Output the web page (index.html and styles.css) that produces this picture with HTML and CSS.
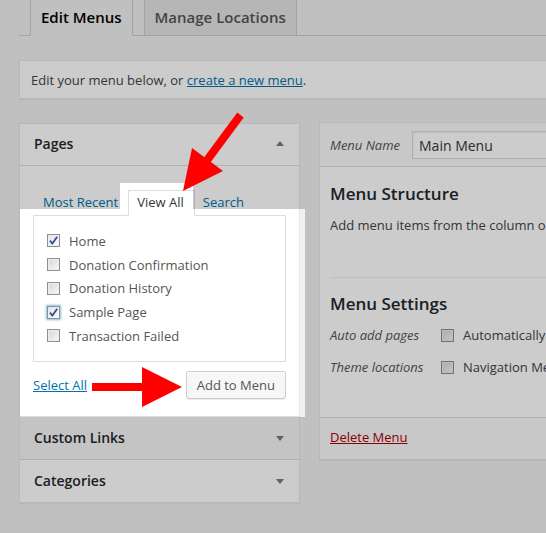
FILE: index.html
```html
<!DOCTYPE html>
<html>
<head>
<meta charset="utf-8">
<title>Menus</title>
<link rel="stylesheet" href="styles.css">
</head>
<body>
<div class="page">
  <div class="nav">
    <a class="nav-tab active" href="#">Edit Menus</a>
    <a class="nav-tab" href="#">Manage Locations</a>
  </div>
  <div class="notice">Edit your menu below, or&nbsp;<a class="link under" href="#">create a new menu</a>.</div>
  <div class="columns">
    <div class="side">
      <div class="accordion">
        <div class="section">
          <div class="sec-title open"><span>Pages</span><span class="tri up"></span></div>
          <div class="sec-content">
            <div class="item-tabs">
              <a class="itab" href="#">Most Recent</a>
              <span class="itab current">View All</span>
              <a class="itab" href="#">Search</a>
            </div>
            <div class="list">
              <div class="row"><span class="cb checked"><svg width="11" height="11" viewBox="0 0 11 11"><path d="M2 5.6 L4.4 8.6 L9.2 1.8" fill="none" stroke="#2f4f9e" stroke-width="1.8"/></svg></span>Home</div>
              <div class="row"><span class="cb"></span>Donation Confirmation</div>
              <div class="row"><span class="cb"></span>Donation History</div>
              <div class="row"><span class="cb checked focus"><svg width="11" height="11" viewBox="0 0 11 11"><path d="M2 5.6 L4.4 8.6 L9.2 1.8" fill="none" stroke="#2f4f9e" stroke-width="1.8"/></svg></span>Sample Page</div>
              <div class="row"><span class="cb"></span>Transaction Failed</div>
            </div>
            <div class="add-row">
              <a class="link under" href="#">Select All</a>
              <button class="btn" type="button">Add to Menu</button>
            </div>
          </div>
        </div>
        <div class="section">
          <div class="sec-title hover"><span>Custom Links</span><span class="tri down"></span></div>
        </div>
        <div class="section">
          <div class="sec-title"><span>Categories</span><span class="tri down"></span></div>
        </div>
      </div>
    </div>
    <div class="main">
      <div class="menu-panel">
        <div class="panel-head">
          <span class="name-label">Menu Name</span>
          <input class="name-input" type="text" value="Main Menu">
        </div>
        <div class="panel-body">
          <h3 class="heading first">Menu Structure</h3>
          <p class="desc">Add menu items from the column on the left.</p>
          <div class="settings">
            <h3 class="heading">Menu Settings</h3>
            <div class="set-row"><span class="set-label">Auto add pages</span><span class="cb"></span><span>Automatically add new top-level pages to this menu</span></div>
            <div class="set-row"><span class="set-label">Theme locations</span><span class="cb"></span><span>Navigation Menu</span></div>
          </div>
        </div>
        <div class="panel-foot"><a class="delete" href="#">Delete Menu</a></div>
      </div>
    </div>
  </div>
</div>
<svg class="overlay" width="546" height="533" viewBox="0 0 546 533">
  <path fill="#000" fill-opacity="0.2" fill-rule="evenodd" d="M0 0H546V533H0Z M20 209H120V183H193V209H305V417H20Z"/>
  <line x1="240.5" y1="115" x2="205" y2="163" stroke="#ff0000" stroke-width="8"/>
  <polygon fill="#ff0000" points="192,148 223,171 183,191"/>
  <rect x="92" y="383" width="51" height="8" fill="#ff0000"/>
  <polygon fill="#ff0000" points="142,367 142,407 182,387"/>
</svg>
</body>
</html>
```
FILE: styles.css
```css
html, body {
  margin: 0;
  padding: 0;
  overflow: hidden;
}
body {
  position: relative;
  width: 546px;
  height: 533px;
  background: #f1f1f1;
  font-family: "Open Sans", "Liberation Sans", sans-serif;
  font-size: 13px;
  line-height: 18px;
  color: #444;
}
.page {
  padding-left: 19px;
  width: 820px;
}
.nav {
  display: flex;
  align-items: flex-end;
  height: 35px;
  border-bottom: 1px solid #ccc;
}
.nav-tab {
  display: block;
  border: 1px solid #ccc;
  border-bottom: none;
  background: #e4e4e4;
  color: #555;
  font-size: 15px;
  line-height: 24px;
  font-weight: 600;
  padding: 14px 10px 6px;
  margin-left: 11px;
  text-decoration: none;
}
.nav-tab.active {
  background: #f1f1f1;
  color: #000;
  border-bottom: 1px solid #f1f1f1;
  margin-bottom: -1px;
}
.notice {
  margin-top: 24px;
  height: 39px;
  box-sizing: border-box;
  border: 1px solid #e5e5e5;
  background: #fff;
  box-shadow: 0 1px 1px rgba(0,0,0,.04);
  display: flex;
  align-items: center;
  padding: 0 11px;
}
.link {
  color: #0073aa;
  text-decoration: none;
}
.under {
  text-decoration: underline;
}
.columns {
  display: flex;
  align-items: flex-start;
  margin-top: 23px;
}
.side {
  width: 281px;
  flex: none;
  margin-top: 1px;
}
.accordion {
  border: 1px solid #e5e5e5;
  background: #fff;
  box-shadow: 0 1px 1px rgba(0,0,0,.04);
}
.section + .section {
  border-top: 1px solid #ddd;
}
.sec-title {
  height: 42px;
  box-sizing: border-box;
  display: flex;
  align-items: center;
  justify-content: space-between;
  padding: 0 15px 0 14px;
  font-size: 14px;
  font-weight: 600;
  color: #23282d;
}
.sec-title.open {
  height: 42px;
  padding-bottom: 2px;
  border-bottom: 1px solid #ddd;
}
.sec-title.hover {
  background: #f5f5f5;
}
.tri {
  width: 0;
  height: 0;
  border-left: 4px solid transparent;
  border-right: 4px solid transparent;
}
.tri.up {
  border-bottom: 5px solid #787c82;
}
.tri.down {
  border-top: 5px solid #787c82;
}
.sec-content {
  padding: 24px 0 17px;
}
.item-tabs {
  display: flex;
  align-items: flex-end;
  height: 25px;
  padding-left: 23px;
}
.itab {
  display: block;
  line-height: 18px;
  padding: 0 0 4px;
  color: #0073aa;
  text-decoration: none;
}
.itab.current {
  position: relative;
  color: #32373c;
  background: #fff;
  border: 1px solid #ddd;
  border-bottom: 1px solid #fff;
  padding: 2px 10px 4px 8px;
  margin: 0 8px -1px 10px;
}
.list {
  border: 1px solid #ddd;
  margin: 0 13px;
  padding: 13px 13px 13.25px;
  background: #fff;
}
.row {
  display: flex;
  align-items: center;
  height: 23.75px;
  color: #555;
}
.cb {
  display: inline-flex;
  align-items: center;
  justify-content: center;
  flex: none;
  width: 13px;
  height: 13px;
  box-sizing: border-box;
  margin-right: 9px;
  border: 1px solid #8f8f8f;
  background: linear-gradient(135deg, #d6d6d6, #f8f8f8);
  box-shadow: inset 0 0 0 1px #eeeeee;
}
.cb.checked {
  background: linear-gradient(135deg, #e4e4e4, #fcfcfc);
}
.cb.focus {
  box-shadow: 0 0 2px 1px rgba(30,140,190,.55);
}
.add-row {
  display: flex;
  justify-content: space-between;
  align-items: center;
  margin: 9px 13px 0;
}
.btn {
  height: 28px;
  box-sizing: border-box;
  padding: 0 10px;
  font-family: "Open Sans", "Liberation Sans", sans-serif;
  font-size: 13px;
  line-height: 26px;
  color: #555;
  background: #f7f7f7;
  border: 1px solid #ccc;
  border-radius: 3px;
  box-shadow: inset 0 1px 0 #fff, 0 1px 0 rgba(0,0,0,.08);
}
.main {
  flex: none;
  width: 480px;
  margin-left: 19px;
}
.menu-panel {
  border: 1px solid #e5e5e5;
  background: #fff;
  box-shadow: 0 1px 1px rgba(0,0,0,.04);
}
.panel-head {
  display: flex;
  align-items: center;
  padding: 8px 10px 7px;
  background: #fbfbfb;
  border-bottom: 1px solid #dfdfdf;
}
.name-label {
  font-style: italic;
  color: #555;
  margin-right: 12px;
}
.name-input {
  height: 28px;
  width: 300px;
  box-sizing: border-box;
  border: 1px solid #ddd;
  background: #fff;
  padding: 0 6px;
  font-family: "Open Sans", "Liberation Sans", sans-serif;
  font-size: 14px;
  color: #32373c;
  box-shadow: inset 0 1px 2px rgba(0,0,0,.07);
}
.panel-body {
  padding: 0 10px 41px;
}
.heading {
  font-size: 17px;
  line-height: 23px;
  font-weight: 600;
  color: #23282d;
  margin: 0;
}
.heading.first {
  margin-top: 15px;
}
.desc {
  margin: 11px 0 0;
}
.settings {
  margin-top: 43px;
  border-top: 1px solid #eee;
  padding-top: 14px;
}
.set-row {
  display: flex;
  align-items: center;
  height: 18px;
  margin-top: 14px;
  white-space: nowrap;
}
.settings .heading + .set-row {
  margin-top: 11px;
}
.set-label {
  width: 111px;
  flex: none;
  font-style: italic;
  color: #555;
}
.panel-foot {
  border-top: 1px solid #dfdfdf;
  background: #fbfbfb;
  padding: 10px 10px 13px;
}
.delete {
  color: #a00;
  text-decoration: underline;
}
.overlay {
  position: absolute;
  top: 0;
  left: 0;
  pointer-events: none;
}
```
